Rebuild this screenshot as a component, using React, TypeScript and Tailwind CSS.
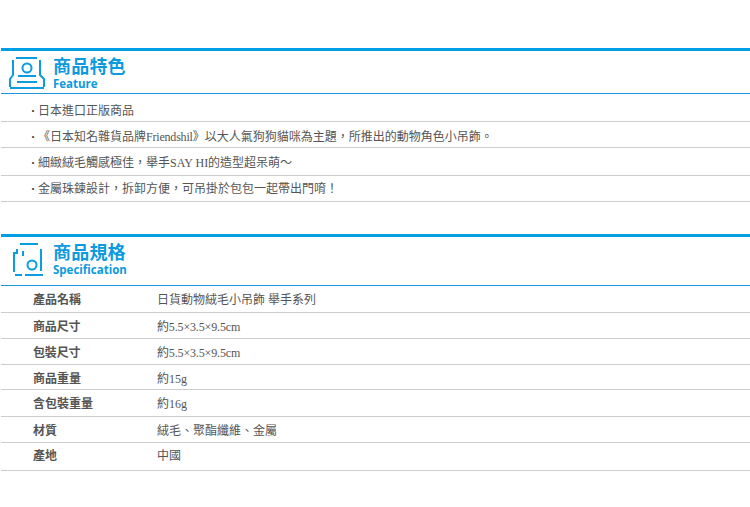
const features = [
	{ text: <>日本進口正版商品</>, id: "a", height: "h-[28px] pt-[7px]" },
	{
		text: (
			<>
				《日本知名雜貨品牌<span className="tracking-[-0.2px]">Friendshil</span>》以大人氣狗狗貓咪為主題，所推出的動物角色小吊飾。
			</>
		),
		id: "b",
		height: "h-[26px] pt-[5px]",
	},
	{ text: <>細緻絨毛觸感極佳，舉手SAY HI的造型超呆萌～</>, id: "c", height: "h-[28px] pt-[2px]" },
	{ text: <>金屬珠鍊設計，拆卸方便，可吊掛於包包一起帶出門唷！</>, id: "d", height: "h-[26px]" },
];

const specs = [
	{ label: "產品名稱", value: "日貨動物絨毛小吊飾 舉手系列", height: "h-[27px] pt-[2px]" },
	{ label: "商品尺寸", value: "約5.5×3.5×9.5cm", height: "h-[26px] pt-[2px] tracking-[-0.15px]" },
	{ label: "包裝尺寸", value: "約5.5×3.5×9.5cm", height: "h-[26px] pt-[2px] tracking-[-0.15px]" },
	{ label: "商品重量", value: "約15g", height: "h-[25px] pt-[4px]" },
	{ label: "含包裝重量", value: "約16g", height: "h-[27px] pt-[2px]" },
	{ label: "材質", value: "絨毛、聚酯纖維、金屬", height: "h-[26px] pt-[2px]" },
	{ label: "產地", value: "中國", height: "h-[28px] pb-[2px]" },
];

function FeatureIcon() {
	return (
		<svg width="38" height="34" viewBox="8 56 38 34" fill="none" stroke="#0a9de0" strokeWidth="2" className="mt-[5px] shrink-0">
			<title>Feature</title>
			<path d="M16 58H37" />
			<path d="M13 60V75L10 79V87" />
			<path d="M40 60V75L44 79V87" />
			<circle cx="27" cy="68" r="4.500" />
			<path d="M18 76H36" />
			<path d="M17 82H37" />
			<path d="M10 88H44" />
		</svg>
	);
}

function SpecIcon() {
	return (
		<svg width="38" height="40" viewBox="8 239 38 40" fill="none" stroke="#0a9de0" strokeWidth="2" className="mt-[2px] shrink-0">
			<title>Specification</title>
			<path d="M20 244H38" />
			<path d="M41 249V271" />
			<path d="M17 249V253H14V272" />
			<path d="M23 251V256" />
			<circle cx="32" cy="265" r="4.500" />
			<path d="M15 275H22" />
			<path d="M25 275H43" />
		</svg>
	);
}

function SectionHead({ title, sub, icon, height }: { title: string; sub: string; icon: React.ReactNode; height: string }) {
	return (
		<div className={`ml-px flex items-start border-t-[3px] border-b border-t-[#009fe3] border-b-[#1b95d8] ${height}`}>
			<div className="flex w-[52px] pl-[7px]">{icon}</div>
			<div className="flex flex-col pt-[7px]">
				<span className="text-[18px] leading-[18px] font-bold tracking-[0.2px] text-[#0b9ade]">{title}</span>
				<span className="font-['Open_Sans',sans-serif] text-[11.500px] leading-[15px] font-bold text-[#0b9ade]">{sub}</span>
			</div>
		</div>
	);
}

export default function App() {
	return (
		<div className="h-[507px] w-[750px] overflow-hidden bg-white pt-[48px] font-['Liberation_Serif','Noto_Sans_CJK_TC',serif] text-[12px] text-[#555]">
			<SectionHead title="商品特色" sub="Feature" icon={<FeatureIcon />} height="h-[46px]" />
			<ul>
				{features.map((item) => (
					<li key={item.id} className={`ml-px flex items-center border-b border-[#ccc] pl-[30px] ${item.height}`}>
						<span className="w-[7px] font-bold text-[#333]">·</span>
						<span>{item.text}</span>
					</li>
				))}
			</ul>
			<div className="mt-[32px]">
				<SectionHead title="商品規格" sub="Specification" icon={<SpecIcon />} height="h-[52px]" />
			</div>
			<div>
				{specs.map((row) => (
					<div key={row.label} className={`ml-px flex items-center border-b border-[#ccc] pl-[32px] ${row.height}`}>
						<span className="w-[124px] font-bold">{row.label}</span>
						<span>{row.value}</span>
					</div>
				))}
			</div>
		</div>
	);
}
